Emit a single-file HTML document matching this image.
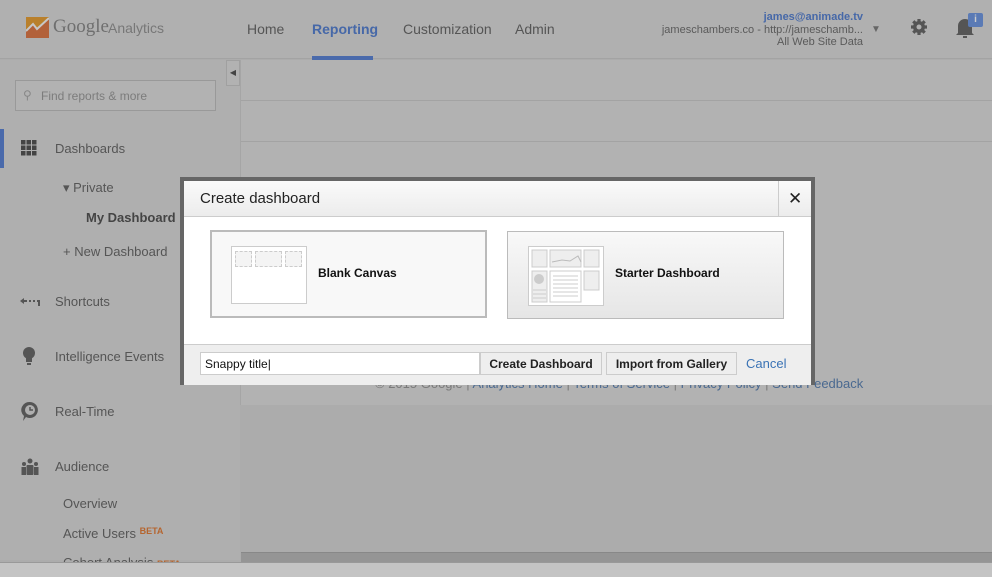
<!DOCTYPE html>
<html><head><style>
*{margin:0;padding:0;box-sizing:border-box}
body{width:992px;height:577px;overflow:hidden;background:#acacac;font-family:"Liberation Sans",Arial,sans-serif;position:relative}
.a{position:absolute}
.t{position:absolute;white-space:nowrap}
</style></head><body>
<!-- header -->
<div class="a" style="left:0;top:0;width:992px;height:59px;background:#b0b0b0;border-bottom:1px solid #a3a3a3"></div>
<svg class="a" style="left:26px;top:17px" width="23" height="21"><rect width="23" height="21" fill="#b9802c"/><path d="M0 21V14L7 7 11 12 23 1V21Z" fill="#b2613a"/><path d="M0 14L7 7 11 12 23 1" stroke="#c7c7c7" stroke-width="2" fill="none"/></svg>
<div class="t" style="left:53px;top:16px;font-size:19px;color:#6f6f6f;font-family:'Liberation Serif',serif">Google</div>
<div class="t" style="left:108px;top:20px;font-size:14px;color:#777">Analytics</div>
<div class="t" style="left:247px;top:21px;font-size:14px;color:#555">Home</div>
<div class="t" style="left:312px;top:21px;font-size:14px;color:#4668a8;font-weight:bold">Reporting</div>
<div class="a" style="left:312px;top:56px;width:61px;height:4px;background:#4a6aab"></div>
<div class="t" style="left:403px;top:21px;font-size:14px;color:#555">Customization</div>
<div class="t" style="left:515px;top:21px;font-size:14px;color:#555">Admin</div>
<div class="t" style="right:129px;top:11px;font-size:11px;color:#4668a8;font-weight:bold;text-align:right">james@animade.tv</div>
<div class="t" style="right:129px;top:24px;font-size:11px;color:#5a5a5a">jameschambers.co - http://jameschamb...</div>
<div class="t" style="right:129px;top:36px;font-size:11px;color:#5a5a5a">All Web Site Data</div>
<div class="t" style="left:871px;top:24px;font-size:10px;color:#666">▼</div>
<svg class="a" style="left:910px;top:18px" width="18" height="18" viewBox="0 0 18 18"><g fill="#555"><circle cx="9" cy="9" r="6"/><g stroke="#555" stroke-width="3.2"><path d="M9 1v16M1 9h16M3.3 3.3l11.4 11.4M14.7 3.3L3.3 14.7"/></g></g><circle cx="9" cy="9" r="2.5" fill="#b0b0b0"/></svg>
<svg class="a" style="left:955px;top:17px" width="20" height="22"><path d="M3 16V9a7 7 0 0 1 14 0V16L19 18H1Z M8 19h4v2H8z" fill="#555"/></svg>
<div class="a" style="left:968px;top:13px;width:15px;height:14px;background:#5a7ab5;border-radius:2px;color:#ccc;font-size:10px;text-align:center;line-height:14px;font-weight:bold">i</div>
<!-- sidebar -->
<div class="a" style="left:0;top:60px;width:240px;height:500px;background:#afafaf"></div>
<div class="a" style="left:226px;top:60px;width:14px;height:26px;border:1px solid #a0a0a0;background:#b2b2b2;font-size:8px;color:#444;text-align:center;line-height:24px">◀</div>
<div class="a" style="left:15px;top:80px;width:201px;height:31px;border:1px solid #999;background:#b2b2b2"></div>
<div class="t" style="left:23px;top:88px;font-size:12px;color:#888">⚲</div>
<div class="t" style="left:41px;top:89px;font-size:12px;color:#7c7c7c">Find reports &amp; more</div>
<div class="a" style="left:0;top:129px;width:4px;height:39px;background:#4a6aab"></div>
<svg class="a" style="left:21px;top:140px" width="16" height="16"><g fill="#444"><rect x="0" y="0" width="4.5" height="4.5"/><rect x="5.5" y="0" width="4.5" height="4.5"/><rect x="11" y="0" width="4.5" height="4.5"/><rect x="0" y="5.5" width="4.5" height="4.5"/><rect x="5.5" y="5.5" width="4.5" height="4.5"/><rect x="11" y="5.5" width="4.5" height="4.5"/><rect x="0" y="11" width="4.5" height="4.5"/><rect x="5.5" y="11" width="4.5" height="4.5"/><rect x="11" y="11" width="4.5" height="4.5"/></g></svg>
<div class="t" style="left:55px;top:141px;font-size:13px;color:#555">Dashboards</div>
<div class="t" style="left:63px;top:180px;font-size:13px;color:#555">▾ Private</div>
<div class="t" style="left:86px;top:210px;font-size:13px;color:#444;font-weight:bold">My Dashboard</div>
<div class="t" style="left:63px;top:244px;font-size:13px;color:#555">+ New Dashboard</div>
<svg class="a" style="left:19px;top:297px" width="22" height="10"><path d="M1 4l4-3v6z" fill="#555"/><path d="M4 4h4M10 4h2M14 4h2M18 4h2v5" stroke="#555" stroke-width="2" fill="none"/></svg>
<div class="t" style="left:55px;top:294px;font-size:13px;color:#555">Shortcuts</div>
<svg class="a" style="left:22px;top:347px" width="14" height="20"><circle cx="7" cy="6" r="6" fill="#555"/><rect x="4" y="11" width="6" height="4" fill="#555"/><rect x="5" y="16" width="4" height="2" fill="#555"/></svg>
<div class="t" style="left:55px;top:349px;font-size:13px;color:#555">Intelligence Events</div>
<svg class="a" style="left:20px;top:401px" width="20" height="22"><path d="M10 1a8 8 0 1 1-4 15l-3 4 1-5a8 8 0 0 1 6-14z" fill="#555"/><circle cx="10" cy="9" r="5" fill="#afafaf"/><path d="M10 6v3h3" stroke="#555" stroke-width="1.5" fill="none"/></svg>
<div class="t" style="left:55px;top:404px;font-size:13px;color:#555">Real-Time</div>
<svg class="a" style="left:20px;top:458px" width="20" height="18"><g fill="#555"><circle cx="10" cy="3" r="2.5"/><circle cx="4" cy="6" r="2"/><circle cx="16" cy="6" r="2"/><rect x="6.5" y="7" width="7" height="10" rx="1"/><rect x="1.5" y="9" width="4.5" height="8"/><rect x="14" y="9" width="4.5" height="8"/></g></svg>
<div class="t" style="left:55px;top:459px;font-size:13px;color:#555">Audience</div>
<div class="t" style="left:63px;top:496px;font-size:13px;color:#555">Overview</div>
<div class="t" style="left:63px;top:526px;font-size:13px;color:#555">Active Users <span style="font-size:9px;color:#b5652f;font-weight:bold;vertical-align:4px">BETA</span></div>
<div class="t" style="left:63px;top:555px;font-size:13px;color:#555">Cohort Analysis <span style="font-size:9px;color:#b5652f;font-weight:bold">BETA</span></div>
<!-- content -->
<div class="a" style="left:240px;top:60px;width:752px;height:345px;background:#b2b2b2;border-left:1px solid #a5a5a5"></div>
<div class="a" style="left:241px;top:100px;width:751px;height:1px;background:#a3a3a3"></div>
<div class="a" style="left:241px;top:141px;width:751px;height:1px;background:#a3a3a3"></div>
<div class="t" style="left:375px;top:376px;font-size:13px;color:#7a7a7a">© 2015 Google | <span style="color:#4a6990">Analytics Home</span> | <span style="color:#4a6990">Terms of Service</span> | <span style="color:#4a6990">Privacy Policy</span> | <span style="color:#4a6990">Send Feedback</span></div>
<div class="a" style="left:241px;top:552px;width:751px;height:10px;background:#959595;border-top:1px solid #888"></div>
<div class="a" style="left:0;top:562px;width:992px;height:15px;background:#c4c4c4;border-top:1px solid #999"></div>
<!-- dialog -->
<div class="a" style="left:180px;top:177px;width:635px;height:208px;background:#fff;border:4px solid #666">
 <div class="a" style="left:0;top:0;width:627px;height:36px;background:linear-gradient(#fafafa,#ececec);border-bottom:1px solid #ccc"></div>
 <div class="t" style="left:16px;top:9px;font-size:15px;color:#222">Create dashboard</div>
 <div class="a" style="left:594px;top:0;width:1px;height:36px;background:#ccc"></div>
 <div class="t" style="left:604px;top:8px;font-size:17px;color:#222">✕</div>
 <div class="a" style="left:26px;top:49px;width:277px;height:88px;border:2px solid #bbb;background:#f8f8f8"></div>
 <div class="a" style="left:47px;top:65px;width:76px;height:58px;border:1px solid #ccc;background:#fff"></div>
 <div class="a" style="left:51px;top:70px;width:17px;height:16px;border:1px dashed #ccc;background:#f4f4f4"></div>
 <div class="a" style="left:71px;top:70px;width:27px;height:16px;border:1px dashed #ccc;background:#f4f4f4"></div>
 <div class="a" style="left:101px;top:70px;width:17px;height:16px;border:1px dashed #ccc;background:#f4f4f4"></div>
 <div class="t" style="left:134px;top:85px;font-size:12px;font-weight:bold;color:#111">Blank Canvas</div>
 <div class="a" style="left:323px;top:50px;width:277px;height:88px;border:1px solid #bbb;background:linear-gradient(#f8f8f8,#e6e6e6)"></div>
 <div class="a" style="left:344px;top:65px;width:76px;height:60px;border:1px solid #ccc;background:#fff"></div>
 <svg class="a" style="left:344px;top:65px" width="76" height="60"><g fill="#eee" stroke="#ccc"><rect x="4" y="4" width="15" height="17"/><rect x="22" y="4" width="31" height="17"/><rect x="56" y="4" width="15" height="17"/><rect x="4" y="25" width="15" height="31"/><rect x="22" y="25" width="31" height="31" fill="#fff"/><rect x="56" y="25" width="15" height="19"/></g><path d="M24 16l10-2 8 1 8-5 3 6" stroke="#bbb" fill="none"/><circle cx="11" cy="33" r="5" fill="#ccc"/><g stroke="#ccc"><path d="M5 44h13M5 48h13M5 52h13M25 30h25M25 34h25M25 38h25M25 42h25M25 46h25M25 50h25"/></g></svg>
 <div class="t" style="left:431px;top:85px;font-size:12px;font-weight:bold;color:#111">Starter Dashboard</div>
 <div class="a" style="left:0;top:163px;width:627px;height:41px;background:#eee;border-top:1px solid #ccc"></div>
 <div class="a" style="left:16px;top:171px;width:280px;height:23px;border:1px solid #ccc;background:#fff"></div>
 <div class="t" style="left:21px;top:176px;font-size:12px;color:#111">Snappy title|</div>
 <div class="a" style="left:296px;top:171px;width:122px;height:23px;border:1px solid #ccc;background:#eee;font-size:12px;font-weight:bold;color:#222;text-align:center;line-height:22px">Create Dashboard</div>
 <div class="a" style="left:422px;top:171px;width:131px;height:23px;border:1px solid #ccc;background:#eee;font-size:12px;font-weight:bold;color:#222;text-align:center;line-height:22px">Import from Gallery</div>
 <div class="t" style="left:562px;top:175px;font-size:13px;color:#3a73b5">Cancel</div>
</div>
</body></html>
